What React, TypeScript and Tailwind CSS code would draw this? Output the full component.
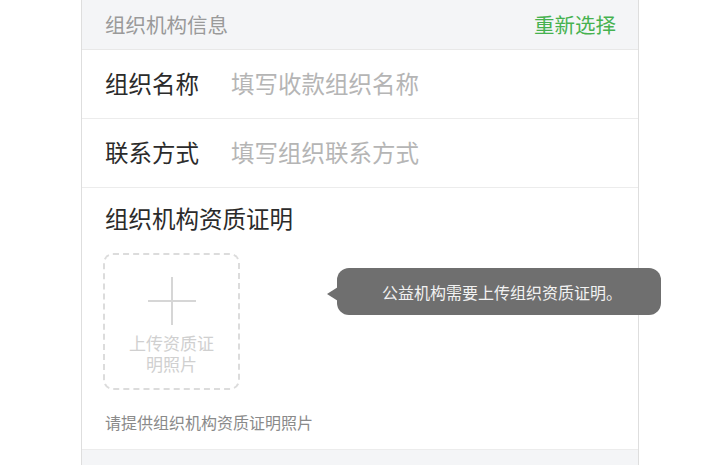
import React from "react";

export default function App() {
  const font = { fontFamily: '"Noto Sans CJK SC", "Noto Sans", sans-serif' };
  return (
    <div className="w-[720px] h-[465px] bg-white overflow-hidden" style={font}>
      <div className="relative mx-auto w-[558px] h-[465px] border-x border-[#dedede] flex flex-col">
        <div className="h-[50px] shrink-0 bg-[#f4f5f7] border-b border-[#e8e8e8] flex items-center justify-between pl-[23px] pr-[22px]">
          <span className="text-[20.5px] text-[#9a9a9a] leading-none">组织机构信息</span>
          <span className="text-[20.5px] text-[#46b24f] leading-none">重新选择</span>
        </div>
        <div className="h-[69px] shrink-0 border-b border-[#ececec] flex items-center pl-[23px]">
          <span className="w-[126px] text-[23.5px] text-[#2b2b2b]">组织名称</span>
          <span className="text-[23.5px] text-[#b5b5b5]">填写收款组织名称</span>
        </div>
        <div className="h-[69px] shrink-0 border-b border-[#ececec] flex items-center pl-[23px]">
          <span className="w-[126px] text-[23.5px] text-[#2b2b2b]">联系方式</span>
          <span className="text-[23.5px] text-[#b5b5b5]">填写组织联系方式</span>
        </div>
        <div className="shrink-0 pl-[23px] pt-[15px] pb-[16px]">
          <div className="text-[23.5px] leading-[30px] text-[#2b2b2b]">组织机构资质证明</div>
          <div className="mt-[20px] ml-[-2px] w-[137px] h-[137px] border-2 border-dashed border-[#dcdcdc] rounded-[10px] flex flex-col items-center pt-[22px] px-[22px]">
            <svg width="48" height="48" viewBox="0 0 48 48">
              <rect x="23" y="0" width="2" height="48" fill="#d6d6d6" />
              <rect x="0" y="23" width="48" height="2" fill="#d6d6d6" />
            </svg>
            <div className="mt-[7px] text-[17px] leading-[21px] text-[#d0d0d0] text-center">上传资质证明照片</div>
          </div>
          <div className="mt-[21px] text-[16px] leading-[22px] text-[#8a8a8a]">请提供组织机构资质证明照片</div>
        </div>
        <div className="flex-1 bg-[#f4f5f7] border-t border-[#ececec]" />

        <div className="absolute left-[255px] top-[268px] w-[324px] h-[47px] rounded-[12px] bg-[#6f6f6f] flex items-center justify-center">
          <div className="absolute left-[-10px] top-[19px] w-0 h-0 border-y-[7px] border-y-transparent border-r-[11px] border-r-[#6f6f6f]" />
          <span className="text-[16px] text-[#f2f2f2] pl-[6px]">公益机构需要上传组织资质证明。</span>
        </div>
      </div>
    </div>
  );
}
